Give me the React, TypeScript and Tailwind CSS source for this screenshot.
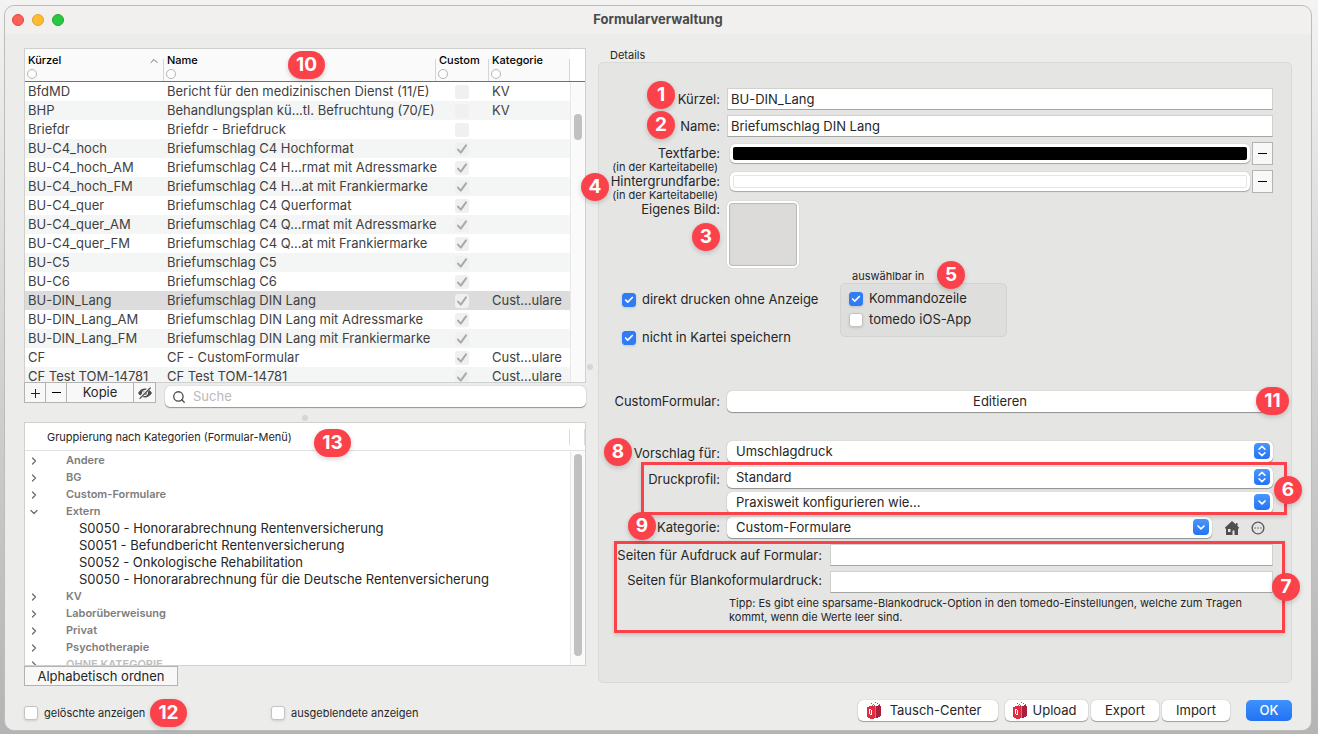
import type { ReactNode } from 'react';
import { Check, ChevronDown, ChevronRight, ChevronUp, CircleEllipsis, Search } from 'lucide-react';
import clsx from 'clsx';

interface FormRow {
  short: string;
  name: string;
  custom: boolean;
  category?: string;
}

const rows: FormRow[] = [
  { short: 'BfdMD', name: 'Bericht für den medizinischen Dienst (11/E)', custom: false, category: 'KV' },
  { short: 'BHP', name: 'Behandlungsplan kü...tl. Befruchtung (70/E)', custom: false, category: 'KV' },
  { short: 'Briefdr', name: 'Briefdr - Briefdruck', custom: false },
  { short: 'BU-C4_hoch', name: 'Briefumschlag C4 Hochformat', custom: true },
  { short: 'BU-C4_hoch_AM', name: 'Briefumschlag C4 H...rmat mit Adressmarke', custom: true },
  { short: 'BU-C4_hoch_FM', name: 'Briefumschlag C4 H...at mit Frankiermarke', custom: true },
  { short: 'BU-C4_quer', name: 'Briefumschlag C4 Querformat', custom: true },
  { short: 'BU-C4_quer_AM', name: 'Briefumschlag C4 Q...rmat mit Adressmarke', custom: true },
  { short: 'BU-C4_quer_FM', name: 'Briefumschlag C4 Q...at mit Frankiermarke', custom: true },
  { short: 'BU-C5', name: 'Briefumschlag C5', custom: true },
  { short: 'BU-C6', name: 'Briefumschlag C6', custom: true },
  { short: 'BU-DIN_Lang', name: 'Briefumschlag DIN Lang', custom: true, category: 'Cust...ulare' },
  { short: 'BU-DIN_Lang_AM', name: 'Briefumschlag DIN Lang mit Adressmarke', custom: true },
  { short: 'BU-DIN_Lang_FM', name: 'Briefumschlag DIN Lang mit Frankiermarke', custom: true },
  { short: 'CF', name: 'CF - CustomFormular', custom: true, category: 'Cust...ulare' },
  { short: 'CF Test TOM-14781', name: 'CF Test TOM-14781', custom: true, category: 'Cust...ulare' },
];

const selectedRow = 'BU-DIN_Lang';

const tree: { label: string; children?: string[]; faded?: boolean }[] = [
  { label: 'Andere' },
  { label: 'BG' },
  { label: 'Custom-Formulare' },
  {
    label: 'Extern',
    children: [
      'S0050 - Honorarabrechnung Rentenversicherung',
      'S0051 - Befundbericht Rentenversicherung',
      'S0052 - Onkologische Rehabilitation',
      'S0050 - Honorarabrechnung für die Deutsche Rentenversicherung',
    ],
  },
  { label: 'KV' },
  { label: 'Laborüberweisung' },
  { label: 'Privat' },
  { label: 'Psychotherapie' },
  { label: 'OHNE KATEGORIE', faded: true },
];

// Numbered red marker, always floats over the control it explains
function Badge({ n, className }: { n: number; className: string }) {
  return (
    <span
      className={clsx(
        'absolute z-20 flex h-7 items-center justify-center rounded-full bg-[#fb424b] text-[19px] font-bold text-white shadow-[0_2px_5px_rgba(0,0,0,0.18)]',
        n === 11 ? 'w-[33px]' : n > 9 ? 'w-[37px]' : 'w-7',
        className,
      )}
    >
      {n}
    </span>
  );
}

function Frame({ className }: { className: string }) {
  return (
    <div
      className={clsx(
        'pointer-events-none absolute z-10 border-[3px] border-[#fb424b] shadow-[0_2px_4px_rgba(0,0,0,0.15)]',
        className,
      )}
    />
  );
}

function CheckField({ label, checked = false, className }: { label: string; checked?: boolean; className?: string }) {
  return (
    <label className={clsx('flex items-center gap-1.5 whitespace-nowrap', className)}>
      <span className="relative flex size-3.5 shrink-0">
        <input
          type="checkbox"
          defaultChecked={checked}
          className="peer size-3.5 appearance-none rounded-[3px] border border-[#c4c4c3] bg-white shadow-sm checked:border-[#2f7cf6] checked:bg-[#2f7cf6]"
        />
        <Check className="pointer-events-none absolute top-0.5 left-0.5 hidden size-2.5 text-white peer-checked:block" strokeWidth={4} />
      </span>
      {label}
    </label>
  );
}

interface SelectProps {
  id: string;
  value: string;
  updown?: boolean;
  label?: string;
}

function Select({ id, value, updown, label }: SelectProps) {
  return (
    <div className="relative h-[21px] min-w-0 flex-1">
      <select
        id={id}
        aria-label={label}
        className="block h-full w-full appearance-none rounded-[5px] bg-white pb-px pl-[9px] text-[13px] leading-5 shadow-[0_1px_1px_rgba(0,0,0,0.35),0_0_1px_rgba(0,0,0,0.3)]"
      >
        <option>{value}</option>
      </select>
      <span className="pointer-events-none absolute top-0.5 right-[3px] flex size-4 flex-col items-center justify-center rounded-sm bg-linear-to-b from-[#4a97fa] to-[#2372f5] text-white">
        {updown ? (
          <svg viewBox="0 0 16 16" className="size-4" fill="none" stroke="currentColor" strokeWidth="1.5" strokeLinecap="round" strokeLinejoin="round">
            <path d="M5 6.2 8 3.4l3 2.8M5 9.8l3 2.8 3-2.8" />
          </svg>
        ) : (
          <svg viewBox="0 0 16 16" className="size-4" fill="none" stroke="currentColor" strokeWidth="1.7" strokeLinecap="round" strokeLinejoin="round">
            <path d="M5 7l3 2.8L11 7" />
          </svg>
        )}
      </span>
    </div>
  );
}

function Label({ htmlFor, className, children }: { htmlFor?: string; className?: string; children: ReactNode }) {
  return (
    <label htmlFor={htmlFor} className={clsx('shrink-0 text-right whitespace-nowrap', className ?? 'w-[121px]')}>
      {children}
    </label>
  );
}

const inputClass =
  'h-[22px] min-w-0 flex-1 border border-[#d0d0cf] border-b-[#a6a6a5] bg-white px-[3px] text-[13px] outline-none';

function ColorRow({ id, label, color }: { id: string; label: string; color: 'black' | 'white' }) {
  return (
    <div className="flex h-7 items-start gap-[7px]">
      <Label htmlFor={id} className="w-[121px] leading-[22px]">
        {label}
        <span className="block pr-0.5 text-[11px] leading-[6px]">(in der Karteitabelle)</span>
      </Label>
      <div className="flex flex-1 items-center gap-0.5 pl-[3px]">
        <button
          id={id}
          type="button"
          className="h-[19px] flex-1 rounded-[5px] bg-white p-[3px] shadow-[0_1px_1px_rgba(0,0,0,0.25),0_0_1px_rgba(0,0,0,0.3)]"
        >
          <span
            className={clsx('block h-[13px] rounded-[2px]', color === 'black' ? 'bg-black' : 'border border-[#e6e6e6] bg-white')}
          />
        </button>
        <button
          type="button"
          aria-label={`${label} entfernen`}
          className="flex h-[23px] w-[21px] items-center justify-center border border-[#b3b3b2] bg-[#f8f8f8]"
        >
          <span className="h-px w-[9px] bg-black" />
        </button>
      </div>
    </div>
  );
}

// Small red package with a green tuft
function BagIcon() {
  return (
    <svg viewBox="0 0 14 17" className="h-[17px] w-3.5" shapeRendering="crispEdges">
      <path fill="#dc2d43" d="M0 5h2V4h6v12H7v1H3v-1H1v-1H0z" />
      <path fill="#a91f3c" d="M9 4h2V3h2v1h1v10h-1v1h-2v1H9z" />
      <path fill="#e9677a" d="M8 4h1v12H8z" />
      <path fill="#2f9e55" d="M4 1h1v1H4zM6 2h1v1H6zM8 0h1v1H8zM7 3h1v1H7zM10 1h1v1h-1zM12 2h1v1h-1zM5 3h1v1H5z" />
      <path fill="#fff" d="M2 7h2v1H2zM2 8h1v4H2zM4 8h1v5H4zM3 12h1v1H3z" />
    </svg>
  );
}

function PushButton({ className, children }: { className: string; children: ReactNode }) {
  return (
    <button
      type="button"
      className={clsx(
        'flex h-[21px] items-center justify-center rounded-[5px] bg-white text-[13px] shadow-[0_1px_1px_rgba(0,0,0,0.3),0_0_1px_rgba(0,0,0,0.35)]',
        className,
      )}
    >
      {children}
    </button>
  );
}

function FormTable() {
  const th = 'relative h-[33px] border-b border-[#6f6f6f] pt-1 pl-[3px] text-left align-top text-[11px] leading-[14px] font-medium text-black';
  const ring = 'mt-0.5 -ml-px block size-[10px] rounded-full border border-[#b5b5b5] bg-white';
  const divider = 'absolute top-2.5 right-0 h-[22px] w-px bg-[#d6d6d6]';

  return (
    <section className="flex min-h-0 shrink-0 grow basis-[335px] overflow-hidden border border-[#d0d0cf] bg-white">
      <div className="relative min-w-0 flex-1">
        <table className="w-full table-fixed border-separate border-spacing-0">
          <colgroup>
            <col className="w-[139px]" />
            <col />
            <col className="w-[53px]" />
            <col className="w-[81px]" />
          </colgroup>
          <thead>
            <tr className="bg-[#fafafa]">
              <th className={th}>
                Kürzel
                <span className={ring} />
                <ChevronUp className="absolute top-1.5 right-1 size-3 text-[#6b6b6b]" strokeWidth={2} />
                <span className={divider} />
              </th>
              <th className={th}>
                Name
                <span className={ring} />
                <Badge n={10} className="top-0.5 left-[124px]" />
                <span className={divider} />
              </th>
              <th className={th}>
                Custom
                <span className={ring} />
                <span className={divider} />
              </th>
              <th className={th}>
                Kategorie
                <span className={ring} />
                <span className={divider} />
              </th>
            </tr>
          </thead>
          <tbody className="text-[#3f3f3f]">
            {rows.map((row) => (
              <tr
                key={row.short}
                className={row.short === selectedRow ? 'bg-[#dcdcdc]' : 'odd:bg-white even:bg-[#f4f5f5]'}
              >
                <td className="h-[19px] p-0 pl-[3px] leading-[19px] whitespace-nowrap">{row.short}</td>
                <td className="h-[19px] p-0 pl-[3px] leading-[19px] whitespace-nowrap">{row.name}</td>
                <td className="h-[19px] p-0 pr-0.5">
                  <span className="relative mx-auto flex size-3.5">
                    <input
                      type="checkbox"
                      disabled
                      checked={row.custom}
                      readOnly
                      aria-label={`${row.short} Custom`}
                      className="size-3.5 appearance-none rounded-[3px] bg-[#f0f0f0]"
                    />
                    {row.custom && (
                      <svg viewBox="0 0 14 14" className="absolute inset-0 size-3.5" fill="none" stroke="#a9a9a9" strokeWidth="2" strokeLinecap="round" strokeLinejoin="round">
                        <path d="M3 7.6 5.8 10.6 11 3.4" />
                      </svg>
                    )}
                  </span>
                </td>
                <td className="h-[19px] p-0 pl-[3px] leading-[19px] whitespace-nowrap">{row.category}</td>
              </tr>
            ))}
          </tbody>
        </table>
      </div>
      <div className="flex w-[15px] flex-col bg-[#fafafa]">
        <div className="h-[33px] border-b border-[#6f6f6f] bg-white" />
        <div className="flex-1 border-l border-[#e8e8e8] pt-8 pl-[3px]">
          <div className="h-[26px] w-2 rounded-full bg-[#c1c1c1]" />
        </div>
      </div>
    </section>
  );
}

function ListToolbar() {
  const square = 'flex h-[21px] items-center justify-center border border-[#b3b3b2] bg-[#f8f8f8]';
  return (
    <div className="flex h-6 items-start">
      <div className="-mt-px flex w-[141px]">
        <button type="button" aria-label="Hinzufügen" className={clsx(square, 'w-[22px]')}>
          <svg viewBox="0 0 10 10" className="size-2.5" stroke="#222" strokeWidth="1" shapeRendering="crispEdges">
            <path d="M0.5 5.5h9M5.5 1v9" />
          </svg>
        </button>
        <button type="button" aria-label="Entfernen" className={clsx(square, '-ml-px w-[22px]')}>
          <span className="h-px w-[9px] bg-black" />
        </button>
        <button type="button" className={clsx(square, '-ml-px w-[68px]')}>
          Kopie
        </button>
        <button type="button" aria-label="Ausblenden" className={clsx(square, '-ml-px w-[23px]')}>
          <svg viewBox="0 0 16 12" className="h-3 w-4">
            <path fill="#4c4c4c" d="M1 6C3 3 5.300 1.600 8 1.600S13 3 15 6c-2 3-4.300 4.400-7 4.400S3 9 1 6z" />
            <circle cx="8" cy="6" r="2.600" fill="none" stroke="#f8f8f8" strokeWidth="1" />
            <path d="M2.600 11.200 12.800.8" stroke="#f8f8f8" strokeWidth="3" />
            <path d="M3 11.400 13.200 1" stroke="#4c4c4c" strokeWidth="1.300" strokeLinecap="round" />
          </svg>
        </button>
      </div>
      <label className="mt-[3px] flex h-[21px] flex-1 items-center gap-[7px] rounded-[5px] bg-white pl-[7px] shadow-[0_1px_1px_rgba(0,0,0,0.35),0_0_1px_rgba(0,0,0,0.35)]">
        <Search className="size-[14px] text-[#4a4a4a]" strokeWidth={2.2} />
        <input
          type="search"
          aria-label="Suche"
          placeholder="Suche"
          className="min-w-0 flex-1 bg-transparent pt-px text-[13px] outline-none placeholder:text-[#b9b9b9]"
        />
      </label>
    </div>
  );
}

function CategoryTree() {
  return (
    <section className="flex min-h-0 shrink-0 grow basis-[244px] flex-col overflow-hidden border border-[#d0d0cf] bg-white">
      <div className="relative flex h-7 shrink-0 items-center border-b border-[#e2e2e2] pt-px pl-[22px] text-[11px]">
        Gruppierung nach Kategorien (Formular-Menü)
        <Badge n={13} className="top-1.5 left-[289px]" />
        <span className="absolute top-1.5 right-[15px] h-4 w-px bg-[#dcdcdc]" />
        <span className="absolute top-1.5 right-0 h-4 w-px bg-[#dcdcdc]" />
      </div>
      <div className="flex min-h-0 flex-1">
        <ul className="min-w-0 flex-1 pt-px">
          {tree.map((node) => (
            <li key={node.label}>
              <button
                type="button"
                className={clsx(
                  'flex h-[17px] w-full items-center gap-[26px] pl-[3px] text-left text-[11px] font-semibold',
                  node.faded ? 'text-[#bdbdbd]' : 'text-[#7d7d7d]',
                )}
              >
                {node.children ? (
                  <ChevronDown className="size-3 text-[#6b6b6b]" strokeWidth={2.500} />
                ) : (
                  <ChevronRight className="size-3 text-[#6b6b6b]" strokeWidth={2.500} />
                )}
                {node.label}
              </button>
              {node.children && (
                <ul className="pl-[54px]">
                  {node.children.map((child) => (
                    <li key={child} className="h-[17px] leading-4 whitespace-nowrap">
                      {child}
                    </li>
                  ))}
                </ul>
              )}
            </li>
          ))}
        </ul>
        <div className="w-[15px] border-l border-[#e8e8e8] bg-[#fafafa] pt-[3px] pl-[3px]">
          <div className="h-[202px] w-2 rounded-full bg-[#c1c1c1]" />
        </div>
      </div>
    </section>
  );
}

function Details() {
  return (
    <section className="mb-[3px] flex min-w-0 flex-1 flex-col">
      <h2 className="h-3.5 pl-3 text-[11px] leading-[14px]">Details</h2>
      <div className="flex-1 rounded-[5px] border border-[#d9d9d8] bg-[#e5e5e4] pt-[25px] pr-[18px]">
        <div className="relative flex items-center gap-[7px]">
          <Badge n={1} className="-top-[7px] left-12" />
          <Label htmlFor="short" className="w-[121px] pt-0.5">
            Kürzel:
          </Label>
          <input id="short" type="text" defaultValue="BU-DIN_Lang" className={inputClass} />
        </div>
        <div className="relative mt-[5px] mb-[5px] flex items-center gap-[7px]">
          <Badge n={2} className="-top-1 left-12" />
          <Label htmlFor="name" className="w-[121px] pt-0.5">
            Name:
          </Label>
          <input id="name" type="text" defaultValue="Briefumschlag DIN Lang" className={inputClass} />
        </div>
        <ColorRow id="text-color" label="Textfarbe:" color="black" />
        <div className="relative">
          <Badge n={4} className="top-[3px] -left-[18px]" />
          <ColorRow id="back-color" label="Hintergrundfarbe:" color="white" />
        </div>
        <div className="relative flex items-start gap-[7px]">
          <Badge n={3} className="top-[25px] left-[93px]" />
          <Label htmlFor="image" className="w-[121px] leading-[22px]">
            Eigenes Bild:
          </Label>
          <button
            id="image"
            type="button"
            aria-label="Eigenes Bild"
            className="mt-[3px] h-[67px] w-[72px] rounded-[5px] border-2 border-white bg-[#dcdbda] shadow-[inset_0_0_1px_1px_rgba(0,0,0,0.15),0_0_1px_rgba(0,0,0,0.3)]"
          />
        </div>

        <div className="flex">
          <div className="flex w-[241px] shrink-0 flex-col gap-[18px] pt-[21px] pl-[23px]">
            <CheckField label="direkt drucken ohne Anzeige" checked className="h-5 pt-px" />
            <CheckField label="nicht in Kartei speichern" checked className="h-5 pt-px" />
          </div>
          <fieldset className="relative min-w-[167px] pt-px">
            <legend className="float-left h-3.5 pl-3 text-[11px] leading-[14px]">auswählbar in</legend>
            <Badge n={5} className="-top-[7px] left-[97px]" />
            <div className="clear-both rounded-[5px] border border-[#d3d3d2] bg-[#dededd] pt-1 pb-1.5 pl-2">
              <CheckField label="Kommandozeile" checked className="h-[21px]" />
              <CheckField label="tomedo iOS-App" className="h-[21px]" />
            </div>
          </fieldset>
        </div>

        <div className="relative mt-11 flex items-center gap-[7px]">
          <Label htmlFor="edit">CustomFormular:</Label>
          <button
            id="edit"
            type="button"
            className="h-[21px] flex-1 rounded-[5px] bg-white shadow-[0_1px_1px_rgba(0,0,0,0.35),0_0_1px_rgba(0,0,0,0.3)]"
          >
            Editieren
          </button>
          <Badge n={11} className="-top-1 -right-4" />
        </div>

        <div className="relative mt-[29px] flex gap-[7px]">
          <Badge n={8} className="-top-[3px] left-[5px]" />
          <Label htmlFor="proposal" className="h-[21px] w-[121px] leading-6">
            Vorschlag für:
          </Label>
          <Select id="proposal" value="Umschlagdruck" updown />
        </div>
        <div className="relative mt-[5px] flex flex-col gap-1">
          <Frame className="-top-[5px] -right-[14px] -bottom-0.5 left-[42px]" />
          <Badge n={6} className="top-[9px] -right-[29px]" />
          <div className="flex gap-[7px]">
            <Label htmlFor="profile" className="h-[21px] w-[121px] leading-6">
              Druckprofil:
            </Label>
            <Select id="profile" value="Standard" updown />
          </div>
          <div className="flex pl-32">
            <Select id="practice" value="Praxisweit konfigurieren wie..." label="Praxisweit konfigurieren" />
          </div>
        </div>
        <div className="relative mt-1 flex items-center gap-[7px]">
          <Badge n={9} className="-top-[5px] left-[29px]" />
          <Label htmlFor="category">Kategorie:</Label>
          <Select id="category" value="Custom-Formulare" />
          <div className="flex w-[54px] items-center justify-between pr-2 pl-[5px]">
            <button type="button" aria-label="Startseite">
              <svg viewBox="0 0 16 16" className="size-4" fill="#4f4f4f">
                <path fillRule="evenodd" d="M8 1 12 4.600V3h1.500v3L15 7.400V8.500h-1V15h-3.500v-4.500h-2V15H2V8.500H1V7.400zM4 9v3h2.500V9z" />
              </svg>
            </button>
            <button type="button" aria-label="Mehr">
              <CircleEllipsis className="size-3.5 text-[#5c5c5c]" strokeWidth={2.4} />
            </button>
          </div>
        </div>

        <div className="relative mt-1.5">
          <Frame className="-top-[3px] -right-[12px] -bottom-[9px] left-[15px]" />
          <Badge n={7} className="top-[29px] -right-[27px]" />
          <div className="flex items-center gap-2">
            <Label htmlFor="pages-form" className="w-[223px] pt-px">
              Seiten für Aufdruck auf Formular:
            </Label>
            <input id="pages-form" type="text" className={inputClass} />
          </div>
          <div className="mt-[5px] flex items-center gap-2">
            <Label htmlFor="pages-blank" className="w-[223px] pb-0.5">
              Seiten für Blankoformulardruck:
            </Label>
            <input id="pages-blank" type="text" className={inputClass} />
          </div>
          <p className="mt-[3px] pl-[130px] text-[11px] leading-[14px]">
            Tipp: Es gibt eine sparsame-Blankodruck-Option in den tomedo-Einstellungen, welche zum Tragen kommt, wenn die
            Werte leer sind.
          </p>
        </div>
      </div>
    </section>
  );
}

export default function App() {
  return (
    <div className="flex min-h-screen bg-linear-to-b from-[#f3f3f3] via-[#d2d2d2] to-[#b4b4b4] pt-[5px] pr-[6px] pb-[5px] pl-1 font-['Inter','Liberation_Sans',sans-serif] text-[13px] text-[#262626]">
      <div className="flex min-w-0 flex-1 flex-col rounded-[10px] border border-[#bcbcbc] bg-[#ececeb]">
        <header className="relative flex h-7 items-center justify-center rounded-t-[10px] bg-[#f1f0ef]">
          <div className="absolute left-[7px] flex gap-2">
            <span className="size-3 rounded-full border border-[#e2463f] bg-[#fe5f57]" />
            <span className="size-3 rounded-full border border-[#e1a032] bg-[#febc2e]" />
            <span className="size-3 rounded-full border border-[#1fa834] bg-[#28c840]" />
          </div>
          <h1 className="font-bold text-[#4a4a4a]">Formularverwaltung</h1>
        </header>

        <main className="relative flex flex-1 gap-3 px-[19px] pt-3.5">
          <div className="flex w-[562px] shrink-0 flex-col">
            <FormTable />
            <ListToolbar />
            <div className="flex h-[15px] items-center justify-center pt-1.5">
              <span className="size-1.5 rounded-full bg-[#d6d6d5]" />
            </div>
            <CategoryTree />
            <button type="button" className="h-5 w-[154px] border border-[#b3b3b2] bg-[#f8f8f8] leading-4">
              Alphabetisch ordnen
            </button>
          </div>
          <span className="absolute top-1/2 left-[582px] mt-1 size-1.5 rounded-full bg-[#d6d6d5]" />
          <Details />
        </main>

        <footer className="flex items-center px-[19px] pt-[13px] pb-2">
          <div className="relative w-[247px] text-[11px]">
            <CheckField label="gelöschte anzeigen" className="pt-1.5" />
            <Badge n={12} className="top-0 left-[126px]" />
          </div>
          <CheckField label="ausgeblendete anzeigen" className="flex-1 pt-1.5 text-[11px]" />
          <PushButton className="w-[140px] gap-[9px] pr-2">
            <BagIcon />
            Tausch-Center
          </PushButton>
          <PushButton className="ml-[7px] w-[83px] gap-1.5 pr-1">
            <BagIcon />
            Upload
          </PushButton>
          <PushButton className="ml-[3px] w-[68px]">Export</PushButton>
          <PushButton className="ml-[3px] w-[68px]">Import</PushButton>
          <button
            type="button"
            className="ml-4 h-[21px] w-[46px] rounded-[5px] bg-linear-to-b from-[#3f91fb] to-[#2372f5] font-medium text-white"
          >
            OK
          </button>
        </footer>
      </div>
    </div>
  );
}
